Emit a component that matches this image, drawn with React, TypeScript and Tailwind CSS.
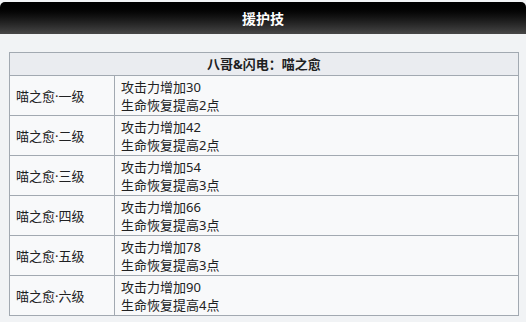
const rows = [
  { name: "喵之愈·一级", atk: 30, hp: 2 },
  { name: "喵之愈·二级", atk: 42, hp: 2 },
  { name: "喵之愈·三级", atk: 54, hp: 3 },
  { name: "喵之愈·四级", atk: 66, hp: 3 },
  { name: "喵之愈·五级", atk: 78, hp: 3 },
  { name: "喵之愈·六级", atk: 90, hp: 4 },
];

export default function App() {
  return (
    <div
      className="w-[526px] h-[322px] overflow-hidden bg-[#f1f3f5] pt-[2px] text-[#202122]"
      style={{ fontFamily: '"Noto Sans", "Noto Sans CJK SC", sans-serif' }}
    >
      {/* Section header */}
      <div className="h-[32px] rounded-t-[5px] bg-gradient-to-b from-[#000000] to-[#474747] flex items-center justify-center">
        <span className="text-white text-[14px] font-bold">援护技</span>
      </div>

      <div className="px-[9px] pt-[18px]">
        <table className="w-[510px] border-collapse text-[13px] leading-[18px]">
          <thead>
            <tr>
              <th
                colSpan={2}
                className="h-[23px] border border-[#a2a9b1] bg-[#eaecf0] font-bold text-center py-0"
              >
                八哥&amp;闪电：喵之愈
              </th>
            </tr>
          </thead>
          <tbody>
            {rows.map((r) => (
              <tr key={r.name} className="h-[40px]">
                <td className="w-[105px] border border-[#a2a9b1] bg-[#f8f9fa] px-[6px] align-middle">
                  {r.name}
                </td>
                <td className="border border-[#a2a9b1] bg-[#f8f9fa] px-[6px] align-middle">
                  <div>攻击力增加{r.atk}</div>
                  <div>生命恢复提高{r.hp}点</div>
                </td>
              </tr>
            ))}
          </tbody>
        </table>
      </div>
    </div>
  );
}
